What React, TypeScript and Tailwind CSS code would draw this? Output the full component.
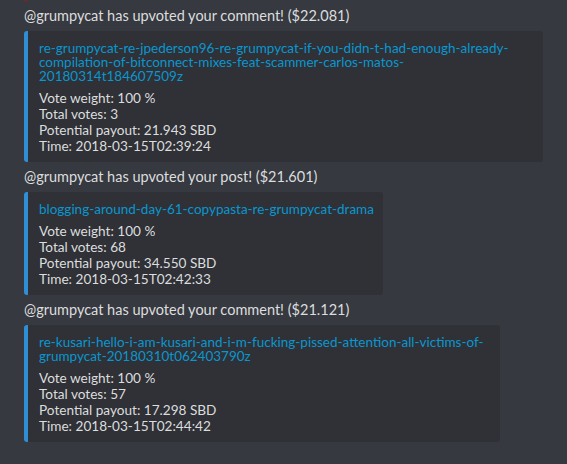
const notifications = [
  {
    id: 1,
    text: "@grumpycat has upvoted your comment! ($22.081)",
    link: [
      "re-grumpycat-re-jpederson96-re-grumpycat-if-you-didn-t-had-enough-already-",
      "compilation-of-bitconnect-mixes-feat-scammer-carlos-matos-",
      "20180314t184607509z",
    ],
    width: "w-[519px]",
    weight: "100 %",
    votes: "3",
    payout: "21.943 SBD",
    time: "2018-03-15T02:39:24",
  },
  {
    id: 2,
    text: "@grumpycat has upvoted your post! ($21.601)",
    link: ["blogging-around-day-61-copypasta-re-grumpycat-drama"],
    width: "w-[359px]",
    weight: "100 %",
    votes: "68",
    payout: "34.550 SBD",
    time: "2018-03-15T02:42:33",
  },
  {
    id: 3,
    text: "@grumpycat has upvoted your comment! ($21.121)",
    link: [
      "re-kusari-hello-i-am-kusari-and-i-m-fucking-pissed-attention-all-victims-of-",
      "grumpycat-20180310t062403790z",
    ],
    width: "w-[476px]",
    weight: "100 %",
    votes: "57",
    payout: "17.298 SBD",
    time: "2018-03-15T02:44:42",
  },
];

function Notification({ n }: { n: typeof notifications[0] }) {
  return (
    <div className="mt-[5px]">
      <p className="text-[14.5px] leading-5 text-[#dcddde] whitespace-nowrap">{n.text}</p>
      {/* Embed */}
      <div className={`mt-[5px] ${n.width} bg-[#2f3136] border-l-4 border-[#2f8fd6] rounded-[3px] pl-[11px] pr-3 pt-[10px] pb-2`}>
        <a className="block text-[13.5px] leading-[14px] text-[#0a96d0]">
          {n.link.map((line) => (
            <span key={line} className="block whitespace-nowrap">{line}</span>
          ))}
        </a>
        <div className="mt-[7px] text-[13.6px] leading-4 text-[#dcddde]">
          <p>Vote weight: {n.weight}</p>
          <p>Total votes: {n.votes}</p>
          <p>Potential payout: {n.payout}</p>
          <p>Time: {n.time}</p>
        </div>
      </div>
    </div>
  );
}

export default function App() {
  return (
    <div className="w-[567px] h-[464px] overflow-hidden bg-[#36393f] pl-6 pt-px relative" style={{ fontFamily: 'Lato, "Noto Sans", sans-serif' }}>
      {/* avatar edge peeking from above */}
      <div className="absolute top-[-6px] left-[24px] w-[4px] h-[8px] rounded-full bg-[#6b2a2a]" />
      {notifications.map((n) => (
        <Notification key={n.id} n={n} />
      ))}
    </div>
  );
}
